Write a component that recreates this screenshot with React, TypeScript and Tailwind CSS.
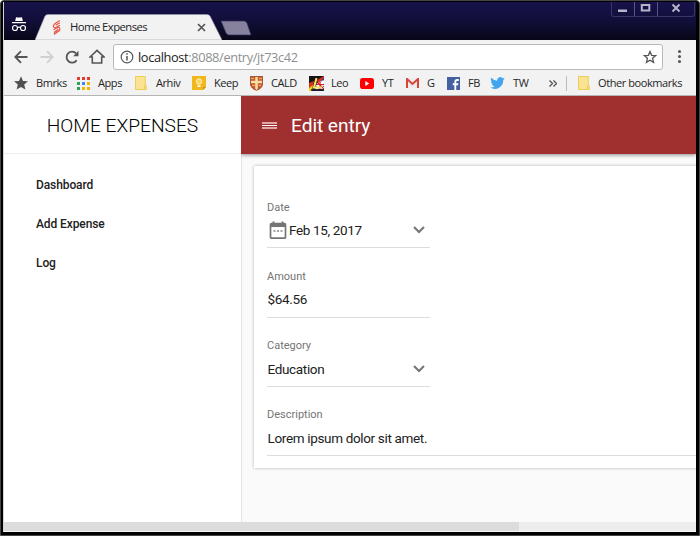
import type { ReactNode } from "react";

const ui = "font-['Open_Sans','Noto_Sans',sans-serif]";

function Incognito() {
  return (
    <svg width="16" height="18" viewBox="0 0 16 18" fill="none">
      <path d="M4.2 5 5 1.2l1.4.4h3.2l1.4-.4.8 3.8z" fill="#fff" />
      <path d="M1 6.6h14" stroke="#fff" strokeWidth="1.4" />
      <circle cx="4" cy="12" r="2.5" stroke="#fff" strokeWidth="1.2" />
      <circle cx="12" cy="12" r="2.5" stroke="#fff" strokeWidth="1.2" />
      <path d="M6.5 11.6q1.5-1 3 0" stroke="#fff" strokeWidth="1.1" />
    </svg>
  );
}

function Favicon() {
  return (
    <svg width="10" height="15" viewBox="0 0 10 15" fill="none" stroke="#e8574a" strokeLinecap="round">
      <path d="M7.500 .8 3 3.500Q1 5 1.500 7L3 8 7.500 5.500M7.500 3 4 5M2 9.500 6.500 7Q8.500 8 7.500 10.500L2.500 14V12L6 9.500M4.300 12.200 6.500 11" strokeWidth="1.200" />
    </svg>
  );
}

function TabStrip() {
  return (
    <div className="flex h-[38px] shrink-0 bg-linear-to-b from-[#17124b] via-[#110e39] to-[#080718]">
      <div className="mt-[14px] ml-[7px] w-[16px]"><Incognito /></div>
      <div className="relative mt-[12px] ml-[8px] h-[26px] w-[187px]">
        <svg className="absolute inset-0" width="187" height="26" viewBox="0 0 187 26">
          <path d="M0 26 10 2Q11 .5 13 .5H172Q174 .5 175 2L187 26Z" fill="#f2f2f2" stroke="#9a98b0" strokeWidth=".6" />
        </svg>
        <div className="relative flex h-full items-center pl-[17px]">
          <Favicon />
          <span className={`${ui} ml-[8px] w-[118px] whitespace-nowrap text-[11.3px] leading-[16px] tracking-[-0.56px] text-[#222]`}>Home Expenses</span>
          <svg className="ml-[9px]" width="9" height="9" viewBox="0 0 9 9" stroke="#555" strokeWidth="1.700"><path d="m1 1 7 7m0-7-7 7" /></svg>
        </div>
      </div>
      <svg className="mt-[18px] -ml-[2px]" width="32" height="16" viewBox="0 0 32 16"><path d="M1 1H24q2 0 3 2l4 12H9q-2 0-3-2Z" fill="#86829d" stroke="#35305c" strokeWidth=".7" /></svg>
      <div className="mr-[1px] ml-auto flex h-[15px] w-[84px] rounded-b-[3px] border border-t-0 border-[#3a3566] text-[#b6b4ca]">
        <div className="w-[23px] border-r border-[#5a5680]"><svg width="22" height="14"><path d="M6 7.500h9v2.500H6z" fill="currentColor" /></svg></div>
        <div className="w-[23px] border-r border-[#5a5680]"><svg width="22" height="14"><path d="M6.800 3h7.500v5.500H6.800z" fill="none" stroke="currentColor" strokeWidth="2" /></svg></div>
        <svg width="36" height="14"><path d="m14.500 2.500 7 7m0-7-7 7" stroke="currentColor" strokeWidth="2" /></svg>
      </div>
    </div>
  );
}

function Toolbar() {
  return (
    <div className="flex h-[33px] shrink-0 items-center">
      <svg className="ml-[10px]" width="14" height="14" viewBox="0 0 14 14" fill="none" stroke="#555" strokeWidth="1.800"><path d="M13.500 7H1.500M7 1.200 1.300 7 7 12.800" /></svg>
      <svg className="ml-[12px]" width="14" height="14" viewBox="0 0 14 14" fill="none" stroke="#d0d0d0" strokeWidth="1.800"><path d="M.5 7h12M7 1.200 12.700 7 7 12.800" /></svg>
      <svg className="ml-[11px]" width="14" height="14" viewBox="0 0 14 14" fill="none"><path d="M11.700 10.200A5.500 5.500 0 1 1 11.200 3.500" stroke="#555" strokeWidth="1.800" /><path d="M13.500.8v5.400H8.200z" fill="#555" /></svg>
      <svg className="ml-[10px]" width="16" height="15" viewBox="0 0 16 15" fill="none" stroke="#555" strokeWidth="1.600"><path d="M1 8 8 1.300 15 8h-2.300v6H3.300V8z" /></svg>
      <div className="ml-[8px] flex h-[26px] w-[550px] items-center rounded-[3px] border border-[#b9b9b9] bg-white">
        <svg className="ml-[6px]" width="14" height="14" viewBox="0 0 14 14"><circle cx="7" cy="7" r="5.800" fill="none" stroke="#555" strokeWidth="1.200" /><path d="M7 6v4.500M7 3.200v1.600" stroke="#555" strokeWidth="1.500" /></svg>
        <span className={`${ui} ml-[4px] whitespace-nowrap text-[12.8px] leading-[18px] tracking-[-0.37px] text-[#909090]`}><span className="text-[#222]">localhost</span>:8088/entry/jt73c42</span>
        <svg className="mr-[5px] ml-auto" width="14" height="14" viewBox="0 0 14 14"><path d="m7 1.500 1.600 3.800 4.100.3-3.100 2.700.9 4L7 10.200l-3.500 2.100.9-4-3.100-2.700 4.100-.3z" fill="none" stroke="#555" strokeWidth="1.300" /></svg>
      </div>
      <div className="ml-[15px] flex flex-col gap-[2px]">
        <i className="size-[3px] rounded-full bg-[#555]" /><i className="size-[3px] rounded-full bg-[#555]" /><i className="size-[3px] rounded-full bg-[#555]" />
      </div>
    </div>
  );
}

function Folder() {
  return <svg width="12" height="14" viewBox="0 0 12 14"><path d="M.5.500h9.800v9.300h1v3.700H.5z" fill="#fae391" stroke="#edcc59" /><path d="M9.500 9.500v4" stroke="#edcc59" /></svg>;
}

const colors = ["#e33b2e", "#e33b2e", "#e33b2e", "#30a34f", "#4285f4", "#f4b400", "#30a34f", "#f4b400", "#f4b400"];

const bookmarks: { name: string; cell: string; slot: string; icon: ReactNode }[] = [
  { name: "Bmrks", cell: "w-[63px]", slot: "w-[22px]", icon: <svg width="14" height="14" viewBox="0 0 14 14"><path d="m7 .3 2 4.600 5 .4-3.800 3.300 1.200 5L7 11l-4.400 2.600 1.200-5L0 5.300l5-.4z" fill="#505050" /></svg> },
  { name: "Apps", cell: "w-[58px]", slot: "w-[21px]", icon: <svg width="13" height="13" viewBox="0 0 13 13">{colors.map((c, i) => <rect key={i} x={(i % 3) * 5} y={Math.floor(i / 3) * 5} width="3" height="3" fill={c} />)}</svg> },
  { name: "Arhiv", cell: "w-[57px]", slot: "w-[21px]", icon: <Folder /> },
  { name: "Keep", cell: "w-[58px]", slot: "w-[22px]", icon: <svg width="14" height="14" viewBox="0 0 14 14"><path d="M0 0h14v11l-3 3H0z" fill="#f2b71c" /><path d="M11 14v-3h3z" fill="#d88b08" /><circle cx="7" cy="5.500" r="2.700" fill="#fbd45d" stroke="#fff2c4" /><path d="M5.500 9.200h3v1.800h-3z" fill="#fff" /></svg> },
  { name: "CALD", cell: "w-[59px]", slot: "w-[21px]", icon: <svg width="13" height="15" viewBox="0 0 13 15"><path d="M0 0h13v8q0 4-6.500 7Q0 12 0 8z" fill="#c9502f" /><path d="M6.500 0v15M0 6h13" stroke="#f6dfa2" strokeWidth="2.600" /><path d="M1 2.500h3m5 0h3M2 9.500h3m3.500 0h3" stroke="#e9ab50" strokeWidth="1.500" /><path d="M.5.500h12v7.500q0 3.500-6 6.300Q.5 11.500.5 8z" fill="none" stroke="#9e5940" /></svg> },
  { name: "Leo", cell: "w-[51px]", slot: "w-[22px]", icon: <svg width="15" height="15" viewBox="0 0 15 15"><path d="M0 0h15v15H0z" fill="#293f87" /><path d="m7 5 8 8M15 5 7 13M11 4v9M7 8.500h8" stroke="#fff" strokeWidth="2.600" /><path d="m7 5 8 8M11 4v9M7 8.500h8" stroke="#d71e30" strokeWidth="1.200" /><path d="M0 0h15L8 7l-3 6H0z" fill="#171513" /><path d="M0 7 5 5 4 10 0 12z" fill="#d83020" /><path d="M8 4 15 0v2L9 7z" fill="#d83020" /><path d="M0 12 4 9 3 15H0z" fill="#f2ca18" /><path d="M7.500 2 5 11.500h8" fill="none" stroke="#fbe463" strokeWidth="2" /><path d="M2 14h13" stroke="#171513" strokeWidth="1.500" /></svg> },
  { name: "YT", cell: "w-[46px]", slot: "w-[22px]", icon: <svg width="14" height="11" viewBox="0 0 14 11"><rect width="14" height="11" rx="2.800" fill="#f00" /><path d="m5.300 3 4 2.500-4 2.500z" fill="#fff" /></svg> },
  { name: "G", cell: "w-[41px]", slot: "w-[21px]", icon: <svg width="13" height="10" viewBox="0 0 13 10"><path d="M0 0h13v10H0z" fill="#ececec" /><path d="M1 10V1l5.500 5L12 1v9" fill="none" stroke="#d84438" strokeWidth="2" /></svg> },
  { name: "FB", cell: "w-[43px]", slot: "w-[21px]", icon: <svg width="13" height="13" viewBox="0 0 13 13"><path d="M0 0h13v13H0z" fill="#4460a0" /><path d="M8.300 13V5q0-2 2-2h1.500M5.800 7.200h5.400" fill="none" stroke="#fff" strokeWidth="1.900" /></svg> },
  { name: "TW", cell: "w-[59px]", slot: "w-[23px]", icon: <svg width="15" height="12" viewBox="0 2 24 20"><path d="M24 4.600a10 10 0 0 1-2.800.8 5 5 0 0 0 2.100-2.700 10 10 0 0 1-3.100 1.200 4.900 4.900 0 0 0-8.400 4.500A14 14 0 0 1 1.700 3.200a4.900 4.900 0 0 0 1.500 6.500 5 5 0 0 1-2.200-.6 5 5 0 0 0 3.900 4.900 5 5 0 0 1-2.200.1 5 5 0 0 0 4.600 3.400A10 10 0 0 1 0 19.500a14 14 0 0 0 21.500-12.400A10 10 0 0 0 24 4.600z" fill="#41a4ef" /></svg> },
];

function BookmarksBar() {
  return (
    <div className={`${ui} flex h-[20px] shrink-0 items-center pl-[10px] text-[11px] leading-[16px] tracking-[-0.42px] text-[#252525]`}>
      {bookmarks.map((b) => (
        <div key={b.name} className={`flex shrink-0 items-center whitespace-nowrap ${b.cell}`}>
          <span className={`flex shrink-0 ${b.slot}`}>{b.icon}</span>{b.name}
        </div>
      ))}
      <svg width="8" height="7" viewBox="0 0 8 7" fill="none" stroke="#555" strokeWidth="1.400"><path d="m.500.500 3 3-3 3m4-6 3 3-3 3" /></svg>
      <span className="ml-[9px] h-[15px] w-px bg-[#bcbcbc]" />
      <span className="ml-[11px] w-[20px]"><Folder /></span>
      <span className="whitespace-nowrap">Other bookmarks</span>
    </div>
  );
}

function Chevron() {
  return <svg className="mr-[5px] ml-auto" width="12" height="8" viewBox="0 0 12 8" fill="none" stroke="#757575" strokeWidth="2"><path d="m1 1 5 5 5-5" /></svg>;
}

function Field({ label, children, wide = false }: { label: string; children: ReactNode; wide?: boolean }) {
  return (
    <div className={`h-[69.3px] shrink-0 border-b border-[#dcdcdc] pt-[20.600px] ${wide ? "w-[600px]" : "w-[163px]"}`}>
      <div className="h-[16px] text-[11px] leading-[16px] text-[#757575]">{label}</div>
      <div className="flex h-[29px] items-center whitespace-nowrap text-[13.500px] tracking-[-0.34px] text-[#212121]">{children}</div>
    </div>
  );
}

export default function App() {
  return (
    <div className="h-[536px] w-[700px] overflow-hidden rounded-t-[4px] border border-[#454545] bg-black pt-px pr-[3px] pb-[3px] pl-[2px] font-[Roboto,sans-serif]">
      <div className="flex h-full flex-col overflow-hidden border-l border-[#d5d5d5]">
        <TabStrip />
        <div className="flex h-[56px] shrink-0 flex-col border-b border-[#b5b5b5] bg-[#f2f2f2]">
          <Toolbar />
          <BookmarksBar />
        </div>
        <div className="flex h-[426px] shrink-0 bg-[#fafafa]">
          <aside className="w-[238px] shrink-0 border-r border-[#e3e3e3] bg-white">
            <div className="flex h-[58px] items-center justify-center border-b border-[#eeeeee] pt-[3px] text-[19.200px] font-light text-black">HOME EXPENSES</div>
            <nav className="flex flex-col pt-[11.500px] pl-[32px] text-[12px] font-medium leading-[39px] tracking-[-0.1px] text-[#212121]">
              <span>Dashboard</span><span>Add Expense</span><span>Log</span>
            </nav>
          </aside>
          <main className="-ml-px min-w-0 flex-1 overflow-hidden">
            <header className="relative flex h-[58px] items-center bg-[#a03030] pl-[21px] text-white shadow-[0_1px_4px_rgba(0,0,0,0.45)]">
              <svg className="mt-px" width="15" height="7" viewBox="0 0 15 7" shapeRendering="crispEdges"><path d="M0 0h15v2H0zM0 5h15v2H0z" fill="#dca8a8" /><path d="M0 3h15v1H0z" fill="#fff" /></svg>
              <h1 className="ml-[14px] pt-[3px] text-[19.200px] tracking-[-0.08px]">Edit entry</h1>
            </header>
            <section className="mt-[12px] ml-[13px] flex h-[302px] w-[640px] flex-col bg-white pt-[13px] pl-[13px] shadow-[0_0_3px_rgba(0,0,0,0.3)]">
              <Field label="Date">
                <svg className="mr-[2px] ml-[2px] shrink-0" width="18" height="19" viewBox="0 0 18 19"><rect x="1.500" y="2.700" width="15" height="14.500" rx="1" fill="none" stroke="#757575" strokeWidth="1.700" /><path d="M1 2.500h16v3.500H1zM3.500 .500h2v3h-2zm9 0h2v3h-2z" fill="#757575" /><path d="M4.500 9.200h2v1.600h-2zm3.500 0h2v1.600H8zm3.500 0h2v1.600h-2z" fill="#858585" /></svg>
                Feb 15, 2017<Chevron />
              </Field>
              <Field label="Amount"><span className="pl-[.500px]">$64.56</span></Field>
              <Field label="Category"><span className="pl-[.500px]">Education</span><Chevron /></Field>
              <Field label="Description" wide><span className="pl-[.500px]">Lorem ipsum dolor sit amet.</span></Field>
            </section>
          </main>
        </div>
        <div className="h-[10px] shrink-0 border-b border-[#f5f5f5] bg-[#ededed]"><div className="h-full w-[515px] bg-[#dcdcdc]" /></div>
      </div>
    </div>
  );
}
